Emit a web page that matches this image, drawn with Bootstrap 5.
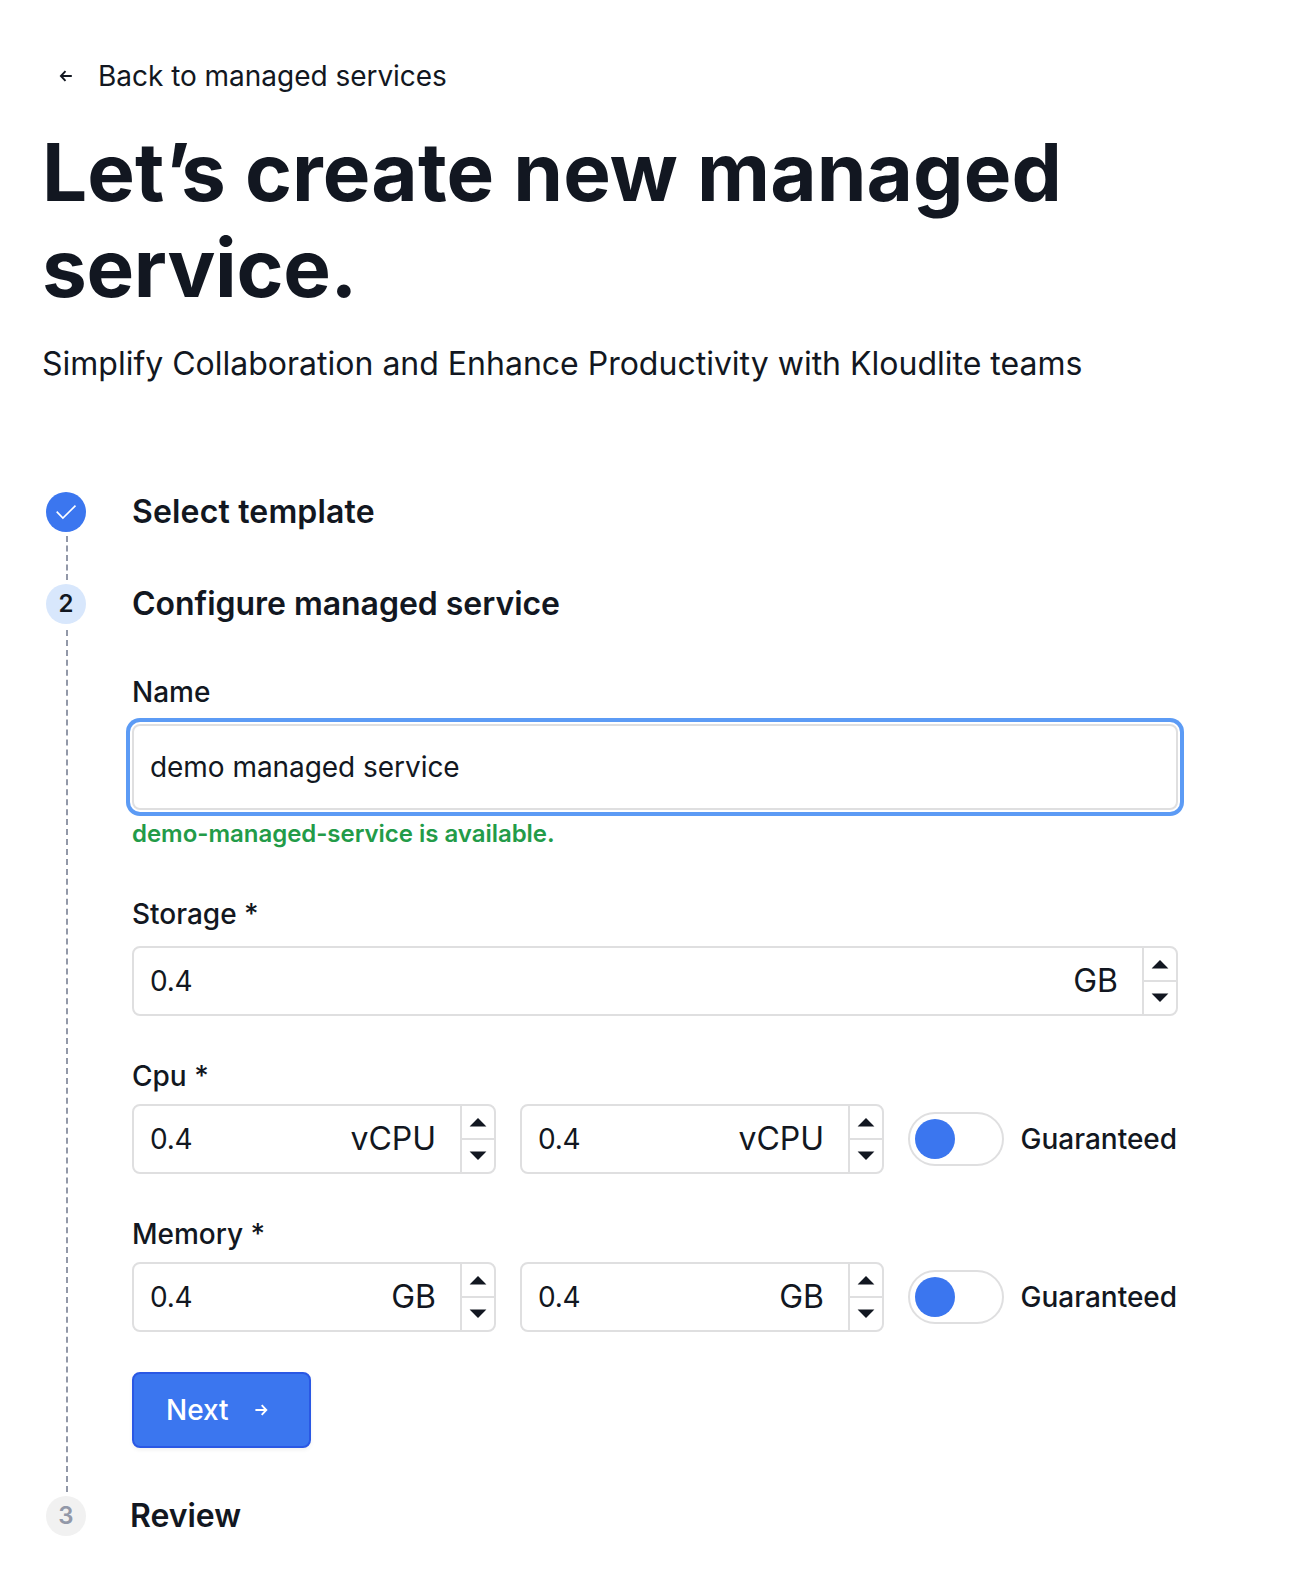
<!DOCTYPE html>
<html lang="en">
<head>
<meta charset="utf-8">
<meta name="viewport" content="width=device-width, initial-scale=1">
<title>Create managed service</title>
<link href="https://cdn.jsdelivr.net/npm/bootstrap@5.3.0/dist/css/bootstrap.min.css" rel="stylesheet">
<style>
  :root { --ink: #121721; --line: #dfdfe0; --brand: #3b76ef; --muted: #9298a8; }
  body { font-family: Inter, "Liberation Sans", sans-serif; font-size: 28px; line-height: 40px; color: var(--ink); background: #fff; overflow-x: hidden; }
  .page { padding: 56px 134px 54px 42px; }
  .back-link { color: var(--ink); padding-left: 17px; gap: 26px; letter-spacing: -.03px; }
  .page-title { font-size: 80px; line-height: 96px; font-weight: 700; letter-spacing: .1px; margin: 28px 0 24px; }
  .apos { margin-left: 1px; letter-spacing: -9.4px; }
  .title-end { letter-spacing: -.3px; }
  .page-sub { font-size: 32px; line-height: 48px; margin: 0 -40px 104px 0; }
  .step-rail { width: 40px; margin: 0 46px 0 4px; }
  .step-rail-last { margin-right: 44px; }
  .step-dot { width: 40px; height: 40px; font-size: 24px; font-weight: 600; }
  .dot-done { background: var(--brand); }
  .dot-now { background: #d8e7fc; }
  .dot-next { background: #f1f1f1; color: var(--muted); }
  .rail-line { border-left: 2px dashed var(--muted); margin: 4px 0 4px 20px; }
  .rail-long { margin-top: 6px; }
  .step-title { font-size: 32px; line-height: 40px; font-weight: 600; letter-spacing: -.03px; margin: 0; }
  .title-loose { letter-spacing: .16px; }
  .step-gap { height: 92px; }
  .fields { padding-top: 48px; padding-bottom: 48px; }
  .field-label { font-weight: 500; margin-bottom: 8px; display: block; }
  .label-wide { margin-bottom: 12px; }
  .label-next { padding-top: 40px; }
  .name-input.form-control { height: 86px; border: 2px solid var(--line); border-radius: 8px; padding: 0 16px; font-size: 28px; letter-spacing: -.05px; color: var(--ink); box-shadow: 0 0 0 2px #fff, 0 0 0 6px #5c9bf5; }
  .help-ok { font-size: 24px; line-height: 32px; font-weight: 600; letter-spacing: -.03px; color: #239b48; margin: 8px 0 44px; }
  .num-box { height: 70px; border: 2px solid var(--line); border-radius: 8px; background: #fff; overflow: hidden; }
  .num-box input { min-width: 0; width: 0; border: 0; outline: 0; padding: 0 0 0 16px; color: var(--ink); background: transparent; letter-spacing: -.2px; }
  .num-unit { font-size: 32px; padding-right: 24px; flex: none; }
  .stepper { width: 34px; flex: none; border-left: 2px solid var(--line); }
  .stepper button { border: 0; padding: 1px 0 0; background: none; }
  .stepper button + button { border-top: 2px solid var(--line); padding: 0 0 1px; }
  .half { width: 364px; flex: none; }
  .switch-row { gap: 16.5px; font-weight: 500; }
  .switch-track { width: 96px; height: 54px; border: 2px solid var(--line); border-radius: 27px; padding-left: 5px; flex: none; }
  .switch-knob { width: 40px; height: 40px; background: var(--brand); }
  .next-btn.btn { width: 179px; height: 76px; border: 2px solid #2a58e4; border-radius: 8px; background: var(--brand); color: #fff; font-size: 28px; line-height: 40px; font-weight: 500; padding: 0 0 0 32px; gap: 26.5px; box-shadow: 0 2px 4px rgba(0,0,0,.06); margin-top: 40px; }
  svg { display: block; flex: none; }
</style>
<script src="https://cdn.jsdelivr.net/npm/bootstrap@5.3.0/dist/js/bootstrap.bundle.min.js"></script>
</head>
<body>
<svg width="0" height="0" class="position-absolute" aria-hidden="true">
  <symbol id="up" viewBox="0 0 18 9"><path d="M9 0L17.4 8.6H.6z" fill="#121721"/></symbol>
  <symbol id="down" viewBox="0 0 18 9"><path d="M.6.4H17.4L9 9z" fill="#121721"/></symbol>
</svg>
<main class="page">
  <a href="#" class="back-link d-flex align-items-center text-decoration-none">
    <svg width="13" height="12" viewBox="0 0 13 12" fill="none" stroke="currentColor" stroke-width="1.9"><path d="M12.8 6H2.2M6.5 1.2L1.9 6l4.6 4.8"/></svg>
    <span>Back to managed services</span>
  </a>
  <h1 class="page-title">Let<span class="apos">’</span>s create new managed <span class="title-end">service.</span></h1>
  <p class="page-sub text-nowrap">Simplify Collaboration and Enhance Productivity with Kloudlite teams</p>

  <section class="d-flex step-gap">
    <div class="step-rail d-flex flex-column">
      <div class="step-dot dot-done rounded-circle d-flex align-items-center justify-content-center">
        <svg width="22" height="16" viewBox="0 0 22 16" fill="none" stroke="#fff" stroke-width="1.6"><path d="M1.7 7.6l6.2 6.5L20.5 1.6"/></svg>
      </div>
      <div class="rail-line flex-grow-1"></div>
    </div>
    <h2 class="step-title title-loose">Select template</h2>
  </section>

  <section class="d-flex">
    <div class="step-rail d-flex flex-column">
      <div class="step-dot dot-now rounded-circle d-flex align-items-center justify-content-center">2</div>
      <div class="rail-line rail-long flex-grow-1"></div>
    </div>
    <div class="flex-grow-1">
      <h2 class="step-title">Configure managed service</h2>
      <form class="fields">
        <label class="field-label label-wide" for="name">Name</label>
        <input id="name" class="form-control name-input" type="text" value="demo managed service">
        <p class="help-ok">demo-managed-service is available.</p>

        <label class="field-label label-wide" for="storage">Storage *</label>
        <div class="num-box d-flex">
          <input id="storage" class="flex-grow-1" value="0.4"><span class="num-unit align-self-center">GB</span>
          <div class="stepper d-flex flex-column"><button type="button" class="flex-fill d-flex align-items-center justify-content-center" aria-label="Increase"><svg width="18" height="9"><use href="#up"/></svg></button><button type="button" class="flex-fill d-flex align-items-center justify-content-center" aria-label="Decrease"><svg width="18" height="9"><use href="#down"/></svg></button></div>
        </div>

        <label class="field-label label-next" for="cpu-min">Cpu *</label>
        <div class="d-flex align-items-center gap-4">
          <div class="num-box half d-flex">
            <input id="cpu-min" class="flex-grow-1" value="0.4"><span class="num-unit align-self-center">vCPU</span>
            <div class="stepper d-flex flex-column"><button type="button" class="flex-fill d-flex align-items-center justify-content-center" aria-label="Increase"><svg width="18" height="9"><use href="#up"/></svg></button><button type="button" class="flex-fill d-flex align-items-center justify-content-center" aria-label="Decrease"><svg width="18" height="9"><use href="#down"/></svg></button></div>
          </div>
          <div class="num-box half d-flex">
            <input class="flex-grow-1" value="0.4" aria-label="Cpu limit"><span class="num-unit align-self-center">vCPU</span>
            <div class="stepper d-flex flex-column"><button type="button" class="flex-fill d-flex align-items-center justify-content-center" aria-label="Increase"><svg width="18" height="9"><use href="#up"/></svg></button><button type="button" class="flex-fill d-flex align-items-center justify-content-center" aria-label="Decrease"><svg width="18" height="9"><use href="#down"/></svg></button></div>
          </div>
          <div class="switch-row d-flex align-items-center">
            <div class="switch-track d-flex align-items-center" role="switch" aria-checked="false"><div class="switch-knob rounded-circle"></div></div>
            <span>Guaranteed</span>
          </div>
        </div>

        <label class="field-label label-next" for="mem-min">Memory *</label>
        <div class="d-flex align-items-center gap-4">
          <div class="num-box half d-flex">
            <input id="mem-min" class="flex-grow-1" value="0.4"><span class="num-unit align-self-center">GB</span>
            <div class="stepper d-flex flex-column"><button type="button" class="flex-fill d-flex align-items-center justify-content-center" aria-label="Increase"><svg width="18" height="9"><use href="#up"/></svg></button><button type="button" class="flex-fill d-flex align-items-center justify-content-center" aria-label="Decrease"><svg width="18" height="9"><use href="#down"/></svg></button></div>
          </div>
          <div class="num-box half d-flex">
            <input class="flex-grow-1" value="0.4" aria-label="Memory limit"><span class="num-unit align-self-center">GB</span>
            <div class="stepper d-flex flex-column"><button type="button" class="flex-fill d-flex align-items-center justify-content-center" aria-label="Increase"><svg width="18" height="9"><use href="#up"/></svg></button><button type="button" class="flex-fill d-flex align-items-center justify-content-center" aria-label="Decrease"><svg width="18" height="9"><use href="#down"/></svg></button></div>
          </div>
          <div class="switch-row d-flex align-items-center">
            <div class="switch-track d-flex align-items-center" role="switch" aria-checked="false"><div class="switch-knob rounded-circle"></div></div>
            <span>Guaranteed</span>
          </div>
        </div>

        <button type="button" class="btn next-btn d-flex align-items-center">Next
          <svg width="13" height="12" viewBox="0 0 13 12" fill="none" stroke="currentColor" stroke-width="1.9"><path d="M.4 6H11M6.7 1.2L11.3 6l-4.6 4.8"/></svg>
        </button>
      </form>
    </div>
  </section>

  <section class="d-flex">
    <div class="step-rail step-rail-last">
      <div class="step-dot dot-next rounded-circle d-flex align-items-center justify-content-center">3</div>
    </div>
    <h2 class="step-title">Review</h2>
  </section>
</main>
</body>
</html>
